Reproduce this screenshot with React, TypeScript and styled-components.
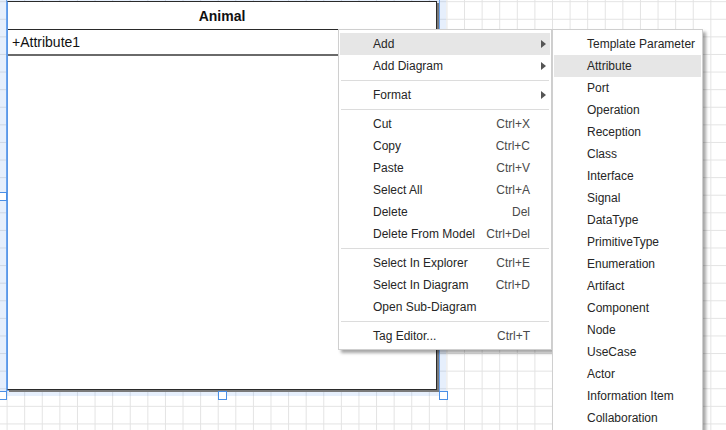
import React from "react";
import styled, { createGlobalStyle } from "styled-components";

const GlobalStyle = createGlobalStyle`
  html, body {
    margin: 0;
    padding: 0;
    overflow: hidden;
    background: #ffffff;
  }
  * {
    box-sizing: border-box;
  }
`;

type Item = {
  label: string;
  shortcut?: string;
  submenu?: boolean;
  active?: boolean;
};

const mainGroups: Item[][] = [
  [
    { label: "Add", submenu: true, active: true },
    { label: "Add Diagram", submenu: true },
  ],
  [{ label: "Format", submenu: true }],
  [
    { label: "Cut", shortcut: "Ctrl+X" },
    { label: "Copy", shortcut: "Ctrl+C" },
    { label: "Paste", shortcut: "Ctrl+V" },
    { label: "Select All", shortcut: "Ctrl+A" },
    { label: "Delete", shortcut: "Del" },
    { label: "Delete From Model", shortcut: "Ctrl+Del" },
  ],
  [
    { label: "Select In Explorer", shortcut: "Ctrl+E" },
    { label: "Select In Diagram", shortcut: "Ctrl+D" },
    { label: "Open Sub-Diagram" },
  ],
  [{ label: "Tag Editor...", shortcut: "Ctrl+T" }],
];

const addItems = [
  "Template Parameter",
  "Attribute",
  "Port",
  "Operation",
  "Reception",
  "Class",
  "Interface",
  "Signal",
  "DataType",
  "PrimitiveType",
  "Enumeration",
  "Artifact",
  "Component",
  "Node",
  "UseCase",
  "Actor",
  "Information Item",
  "Collaboration",
];

const App = () => {
  const handles = [
    { x: -2, y: 192 },
    { x: -2, y: 391 },
    { x: 218, y: 391 },
    { x: 439, y: 391 },
  ];

  return (
    <>
      <GlobalStyle />
      <Canvas>
        <Selection />
        <SelectionLine />
        <ClassBox>
          <ClassName>Animal</ClassName>
          <Attributes>
            <Attr>+Attribute1</Attr>
          </Attributes>
        </ClassBox>
        {handles.map((h, i) => (
          <Handle key={i} style={{ left: h.x, top: h.y }} />
        ))}

        <MainMenu>
          {mainGroups.map((group, gi) => (
            <React.Fragment key={gi}>
              {gi > 0 && <Separator />}
              {group.map((item) => (
                <Row key={item.label} $active={!!item.active}>
                  <Label>{item.label}</Label>
                  <Shortcut>{item.shortcut}</Shortcut>
                  <ArrowCell>{item.submenu && <Arrow />}</ArrowCell>
                </Row>
              ))}
            </React.Fragment>
          ))}
        </MainMenu>

        <SubMenu>
          {addItems.map((name) => (
            <SubRow key={name} $active={name === "Attribute"}>
              {name}
            </SubRow>
          ))}
        </SubMenu>
      </Canvas>
    </>
  );
};

const Canvas = styled.div`
  position: relative;
  width: 726px;
  height: 430px;
  overflow: hidden;
  background-color: #ffffff;
  background-image: linear-gradient(to right, #e3e3e3 1px, transparent 1px),
    linear-gradient(to bottom, #e3e3e3 1px, transparent 1px);
  background-size: 17.6px 17.6px;
  background-position: 6.6px 1.2px;
  font-family: "Liberation Sans", Arial, sans-serif;
`;

const Selection = styled.div`
  position: absolute;
  left: 0;
  top: -6px;
  width: 446px;
  height: 402px;
  background: rgba(90, 150, 235, 0.15);
`;

const SelectionLine = styled.div`
  position: absolute;
  left: 6px;
  top: -1px;
  width: 434px;
  height: 392px;
  border: 1px solid #6aa3ee;
`;

const ClassBox = styled.div`
  position: absolute;
  left: 7px;
  top: 1px;
  width: 430px;
  height: 389px;
  display: flex;
  flex-direction: column;
  background: #ffffff;
  border: 1px solid #2a2a2a;
  border-left-color: #5b97e6;
  box-shadow: 2px 2px 0 #7a7a7a;
`;

const ClassName = styled.div`
  height: 28px;
  display: flex;
  align-items: center;
  justify-content: center;
  font-size: 14px;
  font-weight: bold;
  color: #111;
  border-bottom: 1px solid #2a2a2a;
`;

const Attributes = styled.div`
  height: 26px;
  display: flex;
  align-items: center;
  padding-left: 4px;
  border-bottom: 2px solid #6a6a6a;
`;

const Attr = styled.span`
  font-size: 14px;
  color: #111;
`;

const Handle = styled.div`
  position: absolute;
  width: 9px;
  height: 9px;
  background: #ffffff;
  border: 1px solid #4a8fe6;
`;

const MenuBase = styled.div`
  position: absolute;
  background: #ffffff;
  border: 1px solid #cfcfcf;
  box-shadow: 3px 3px 3px rgba(0, 0, 0, 0.35);
  padding: 2px 1px;
  font-size: 12px;
  color: #262626;
`;

const MainMenu = styled(MenuBase)`
  left: 338px;
  top: 29px;
  width: 214px;
  padding-top: 3px;
`;

const SubMenu = styled(MenuBase)`
  left: 552px;
  top: 29px;
  width: 151px;
  padding-top: 3px;
`;

const Row = styled.div<{ $active: boolean }>`
  height: 22px;
  display: grid;
  grid-template-columns: 1fr auto 20px;
  align-items: center;
  padding-left: 33px;
  background: ${(p) => (p.$active ? "#e6e6e6" : "transparent")};
  white-space: nowrap;
`;

const Label = styled.span``;

const Shortcut = styled.span`
  color: #4a4a4a;
  text-align: right;
`;

const ArrowCell = styled.span`
  display: flex;
  justify-content: flex-end;
  padding-right: 4px;
`;

const Arrow = styled.span`
  width: 0;
  height: 0;
  border-left: 5px solid #555;
  border-top: 4px solid transparent;
  border-bottom: 4px solid transparent;
`;

const Separator = styled.div`
  height: 1px;
  margin: 3px 1px;
  background: #dcdcdc;
`;

const SubRow = styled.div<{ $active: boolean }>`
  height: 22px;
  display: flex;
  align-items: center;
  padding-left: 33px;
  white-space: nowrap;
  background: ${(p) => (p.$active ? "#e6e6e6" : "transparent")};
`;

export default App;
